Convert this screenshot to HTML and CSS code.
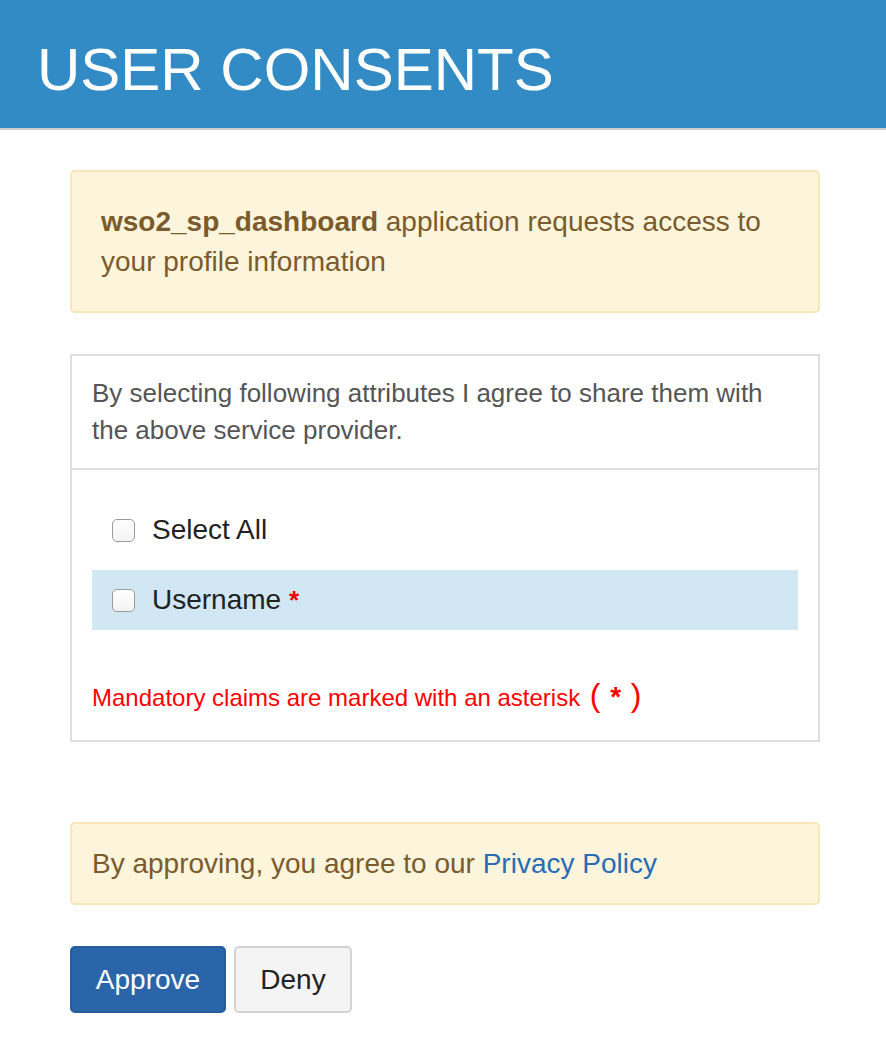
FILE: index.html
```html
<!DOCTYPE html>
<html>
<head>
<meta charset="utf-8">
<link rel="stylesheet" href="styles.css">
</head>
<body>
<header class="topbar"><h1 class="title">USER CONSENTS</h1></header>
<main class="content">
  <div class="alert alert-request"><strong>wso2_sp_dashboard</strong> application requests access to your profile information</div>
  <div class="panel">
    <div class="panel-head">By selecting following attributes I agree to share them with the above service provider.</div>
    <div class="panel-body">
      <label class="claim"><span class="box"></span><span class="claim-text">Select All</span></label>
      <label class="claim claim-info"><span class="box"></span><span class="claim-text">Username <span class="req">*</span></span></label>
      <p class="mandatory">Mandatory claims are marked with an asterisk <span class="paren">(</span> <span class="star">*</span> <span class="paren">)</span></p>
    </div>
  </div>
  <div class="alert alert-policy">By approving, you agree to our <a class="link" href="#">Privacy Policy</a></div>
  <div class="actions">
    <button class="btn btn-primary">Approve</button>
    <button class="btn btn-default">Deny</button>
  </div>
</main>
</body>
</html>
```
FILE: styles.css
```css
html, body {
  margin: 0;
  padding: 0;
  background: #fff;
  font-family: "Liberation Sans", Arial, sans-serif;
}
.topbar {
  height: 130px;
  box-sizing: border-box;
  background: #338bc6;
  border-bottom: 2px solid #cfcfcf;
  display: flex;
  align-items: center;
  padding: 12px 0 0 37px;
}
.title {
  margin: 0;
  color: #fff;
  font-weight: normal;
  font-size: 60px;
  line-height: 1;
}
.content {
  width: 750px;
  margin-left: 70px;
  padding-top: 40px;
}
.alert {
  background: #fcf5dc;
  border: 2px solid #f8e5b8;
  border-radius: 5px;
  color: #7b5b2c;
  font-size: 28px;
  line-height: 40px;
}
.alert-request {
  padding: 30px 30px 29px 29px;
}
.alert-request strong {
  font-weight: bold;
}
.panel {
  margin-top: 41px;
  border: 2px solid #dedede;
}
.panel-head {
  padding: 19px 20px 19px;
  color: #555;
  font-size: 26px;
  line-height: 37px;
  border-bottom: 2px solid #dedede;
}
.panel-body {
  padding: 30px 20px 25px;
  display: flex;
  flex-direction: column;
  gap: 10px;
}
.claim {
  height: 60px;
  display: flex;
  align-items: center;
  padding-left: 20px;
  gap: 17px;
  font-size: 28px;
  color: #222;
}
.claim-info {
  background: #d1e8f4;
}
.box {
  width: 21px;
  height: 21px;
  border: 1px solid #9a9a9a;
  border-radius: 5px;
  background: linear-gradient(#fff, #f3f3f3);
  box-sizing: content-box;
}
.req {
  color: #e00;
  font-weight: bold;
  font-size: 26px;
}
.mandatory {
  margin: 38px 0 0;
  color: #f00;
  font-size: 24px;
  line-height: 34px;
}
.paren {
  font-size: 32px;
}
.paren:first-child {
  margin-left: 3px;
}
.star {
  font-size: 28px;
  font-weight: bold;
  margin: 0 3px;
}
.alert-policy {
  margin-top: 80px;
  padding: 20px 20px 19px;
}
.link {
  color: #2a6bb5;
  text-decoration: none;
}
.actions {
  margin-top: 41px;
  display: flex;
  gap: 8px;
}
.btn {
  height: 67px;
  border-radius: 5px;
  font-family: "Liberation Sans", Arial, sans-serif;
  font-size: 28px;
  padding: 0;
}
.btn-primary {
  width: 156px;
  background: #2a65a9;
  border: 2px solid #265d9b;
  color: #fff;
}
.btn-default {
  width: 118px;
  background: #f4f4f4;
  border: 2px solid #d3d3d3;
  color: #222;
}
```
